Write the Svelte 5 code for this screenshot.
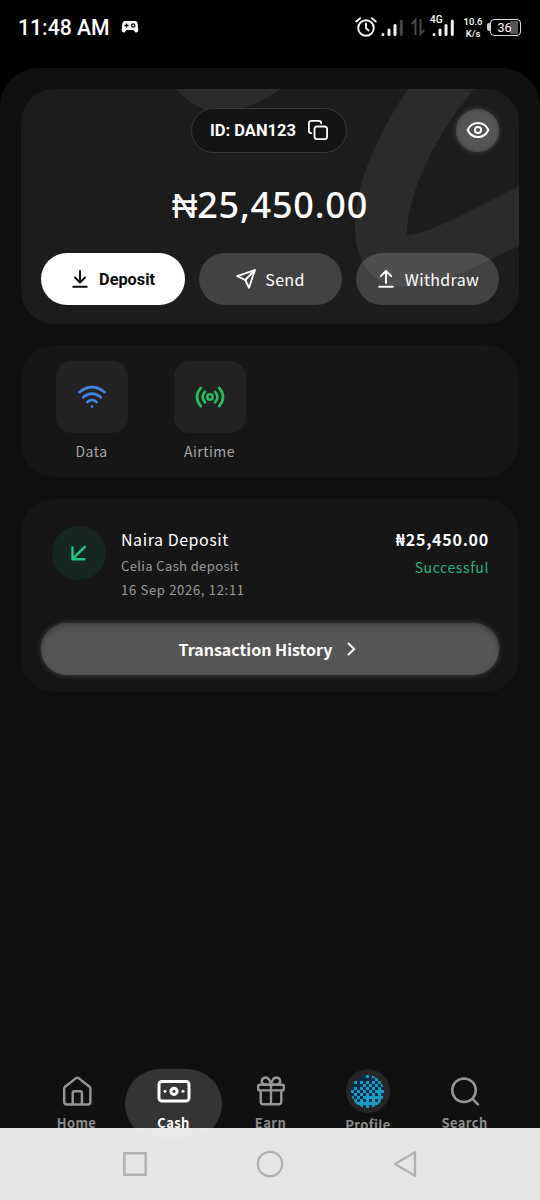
<script>
  const actions = [
    { label: 'Deposit', kind: 'deposit', paths: ['M10 2v11', 'M5 8.500l5 5 5-5', 'M3.200 17.800h13.600'] },
    { label: 'Send', kind: 'send', paths: ['M1.200 7.200L18.800 1.200 13 18.800 9.300 11z', 'M9.300 11L18.800 1.200'] },
    { label: 'Withdraw', kind: 'withdraw', paths: ['M10 14V2.500', 'M4.800 7.200L10 2l5.200 5.200', 'M3.200 17.800h13.600'] }
  ];

  const cells = [];
  for (let y = 0; y < 11; y++) {
    for (let x = 0; x < 11; x++) {
      const level = x * 0.5 + y;
      const oddX = x % 2 === 1;
      const oddY = y % 2 === 1;
      let limit = 99;
      if (oddX && !oddY) limit = 2;
      else if (!oddX && oddY) limit = 4.5;
      else if (oddX && oddY) limit = 9;
      if (level >= limit) cells.push({ x: x * 3, y: y * 3 });
    }
  }
</script>

<div class="phone">
  <header class="status">
    <span class="clock">11:48 AM</span>
    <svg class="pad" width="18" height="14" viewBox="0 0 18 14">
      <path d="M4 1h10q2.500 0 2.700 3l.6 6.500Q17 13 14.500 12.500L12.500 10h-7L3.500 12.500Q1 13 .7 10.500L1.300 4Q1.500 1 4 1z" fill="#fff" />
      <path d="M5.500 3.500v4M3.500 5.500h4" stroke="#000" stroke-width="1.300" />
      <circle cx="12.200" cy="5.500" r="1.700" fill="none" stroke="#000" stroke-width="1.200" />
    </svg>
    <span class="grow"></span>
    <svg class="alarm" width="22" height="20" viewBox="0 0 22 20" fill="none" stroke="#f2f2f2" stroke-width="1.900" stroke-linecap="round">
      <circle cx="11" cy="11" r="7.800" />
      <path d="M11 6.500V11l2.500 2.500M1.200 4.500L5.200 1.200M20.800 4.500L16.800 1.200" />
    </svg>
    <svg class="bars" width="22" height="18" viewBox="0 0 22 18" stroke-width="3" stroke-linecap="round">
      <path d="M2 15.500v.1M8 11v4.500M14 6.500v9" stroke="#f2f2f2" />
      <path d="M20.300 2v13.500" stroke="#444" />
    </svg>
    <svg class="updown" width="14" height="18" viewBox="0 0 14 18" fill="none" stroke="#484848" stroke-width="2">
      <path d="M4.500 17V2L.8 6M9.500 1v15l3.700-4" />
    </svg>
    <div class="cell">
      <span class="gen">4G</span>
      <svg width="23" height="18" viewBox="0 0 23 18" stroke="#f2f2f2" stroke-width="3" stroke-linecap="round">
        <path d="M2 15.500v.1M8 11v4.500M14 6.500v9M20.300 2v13.500" />
      </svg>
    </div>
    <div class="rate"><span>10.6</span><span>K/s</span></div>
    <div class="battery"><i></i><b>36</b></div>
  </header>

  <main>
    <section class="card balance">
      <svg class="swirl" width="498" height="236" viewBox="0 0 498 236">
        <path d="M155 0Q174 23 202 23 228 21 260 0zM387 0C355 47 334 98 334 136C334 174 352 198 382 198C417 198 454 178 498 157V97C458 117 410 145 386 146C386 110 408 54 453 0z" fill="#2b2b2b" />
      </svg>
      <div class="top">
        <div class="idpill">
          <span>ID: DAN123</span>
          <svg width="20" height="20" viewBox="0 0 20 20" fill="none" stroke="#fff" stroke-width="1.800" stroke-linecap="round">
            <rect x="6.500" y="6.500" width="12.600" height="12.600" rx="2.600" />
            <path d="M3.300 13.200Q.9 13.200.9 10.800V3.400Q.9.900 3.400.9h7.400Q13.200.9 13.200 3.300" />
          </svg>
        </div>
        <div class="eye">
          <svg width="24" height="18" viewBox="0 0 24 18" fill="none" stroke="#fff" stroke-width="2">
            <path d="M1.700 9C3.700 4.400 7.500 2 12 2S20.300 4.400 22.300 9C20.300 13.600 16.500 16 12 16S3.700 13.600 1.700 9z" />
            <circle cx="12" cy="9" r="3.100" />
          </svg>
        </div>
      </div>
      <div class="amount"><span class="naira">₦</span>25,450.00</div>
      <div class="actions">
        {#each actions as a}
          <button class={a.kind}>
            <svg width="20" height="20" viewBox="0 0 20 20" fill="none" stroke="currentColor" stroke-width="1.900" stroke-linecap="round" stroke-linejoin="round">
              {#each a.paths as d}<path {d} />{/each}
            </svg>
            <span>{a.label}</span>
          </button>
        {/each}
      </div>
    </section>

    <section class="card services">
      <div class="service">
        <div class="tile">
          <svg width="30" height="24" viewBox="0 0 30 24" fill="none" stroke="#4285e8" stroke-width="2.600" stroke-linecap="round">
            <path d="M2.300 7.200Q15-3 27.700 7.200M6.200 12.300Q15 4.800 23.800 12.300M10.300 17Q15 13 19.700 17M15 21.500v.1" />
          </svg>
        </div>
        <span>Data</span>
      </div>
      <div class="service">
        <div class="tile">
          <svg width="30" height="24" viewBox="0 0 30 24" fill="none" stroke="#27bd5c" stroke-width="2.600" stroke-linecap="round">
            <circle cx="15" cy="12" r="2.700" />
            <path d="M5.800 2.800Q-1.800 12 5.800 21.200M24.200 2.800Q31.800 12 24.200 21.200M10 6.700Q5.200 12 10 17.300M20 6.700Q24.800 12 20 17.300" />
          </svg>
        </div>
        <span>Airtime</span>
      </div>
    </section>

    <section class="card history">
      <div class="entry">
        <div class="badge">
          <svg width="16" height="16" viewBox="0 0 16 16" fill="none" stroke="#22c585" stroke-width="2.400" stroke-linecap="round" stroke-linejoin="round">
            <path d="M14 1.700L1.800 13.900M1.500 2.500v11.800h12" />
          </svg>
        </div>
        <div class="info">
          <span class="title">Naira Deposit</span>
          <span class="sub">Celia Cash deposit</span>
          <span class="sub date">16 Sep 2026, 12:11</span>
        </div>
        <div class="result">
          <span class="sum">₦25,450.00</span>
          <span class="state">Successful</span>
        </div>
      </div>
      <button class="more">
        <span>Transaction History</span>
        <svg width="9" height="14" viewBox="0 0 9 14" fill="none" stroke="#fff" stroke-width="2" stroke-linecap="round" stroke-linejoin="round"><path d="M1.500 1.500L7.200 7 1.500 12.500" /></svg>
      </button>
    </section>
  </main>

  <nav>
    <div class="item">
      <svg width="30" height="32" viewBox="0 0 30 32" fill="none" stroke="#979797" stroke-width="2.400" stroke-linejoin="round" stroke-linecap="round">
        <path d="M2.200 13.500Q2.200 12.500 3.100 11.700L14 3.100Q15.300 2.200 16.600 3.100L27.500 11.700Q28.400 12.500 28.400 13.500V26.800Q28.400 29.500 25.700 29.500H4.900Q2.200 29.500 2.200 26.800zM10.700 29.300V18Q10.700 16.300 12.400 16.300h5.800Q19.900 16.300 19.900 18V29.300" />
      </svg>
      <span>Home</span>
    </div>
    <div class="item active">
      <svg width="34" height="32" viewBox="0 0 34 32" fill="none" stroke="#fff" stroke-width="3">
        <rect x="2" y="6.500" width="30" height="19.500" rx="3" />
        <circle cx="17" cy="16.300" r="3.100" />
        <circle cx="8" cy="16.300" r="1.500" fill="#fff" stroke="none" />
        <circle cx="26" cy="16.300" r="1.500" fill="#fff" stroke="none" />
      </svg>
      <span>Cash</span>
    </div>
    <div class="item">
      <svg width="30" height="32" viewBox="0 0 30 32" fill="none" stroke="#979797" stroke-width="2.400" stroke-linejoin="round">
        <rect x="2.200" y="9.800" width="25.600" height="5.600" rx="1.500" />
        <path d="M4.700 15.500V26.500Q4.700 29.200 7.400 29.200H22.600Q25.300 29.200 25.300 26.500V15.500M15 9.800V29M15 9.800H10Q5.500 9 5.700 6 6.300 2.700 9.500 2.500 13.500 2.500 15 9.800M15 9.800H20Q24.500 9 24.300 6 23.700 2.700 20.500 2.500 16.500 2.500 15 9.800" />
      </svg>
      <span>Earn</span>
    </div>
    <div class="item profile">
      <div class="avatar">
        <svg width="33" height="33" viewBox="0 0 33 33">
          <rect width="33" height="33" fill="#0a2d4c" />
          {#each cells as c}<rect x={c.x} y={c.y} width="3" height="3" fill="#189cc4" />{/each}
        </svg>
      </div>
      <span>Profile</span>
    </div>
    <div class="item">
      <svg width="30" height="32" viewBox="0 0 30 32" fill="none" stroke="#979797" stroke-width="2.500" stroke-linecap="round">
        <circle cx="14" cy="15.300" r="11.800" />
        <path d="M22.500 23.800L28 29.300" />
      </svg>
      <span>Search</span>
    </div>
  </nav>

  <footer>
    <svg width="24" height="24" viewBox="0 0 24 24" fill="none" stroke="#b0b0b0" stroke-width="2.500"><path d="M1.300 1.300h21.400v21.400H1.300z" /></svg>
    <svg width="28" height="28" viewBox="0 0 28 28" fill="none" stroke="#b0b0b0" stroke-width="2.200"><circle cx="14" cy="14" r="12.200" /></svg>
    <svg width="24" height="28" viewBox="0 0 24 28" fill="none" stroke="#b0b0b0" stroke-width="2.400" stroke-linejoin="round"><path d="M22 2.300v23.400L2 14z" /></svg>
  </footer>
</div>

<style>
  :global(body) { margin: 0; background: #000; }
  .phone {
    width: 540px; height: 1200px; overflow: hidden; background: #000; color: #fff;
    display: flex; flex-direction: column;
    font-family: "Noto Sans CJK SC", "Noto Sans", sans-serif; letter-spacing: .5px;
  }
  .phone * { box-sizing: border-box; }
  svg { display: block; flex: none; }
  button { border: 0; padding: 0; font: inherit; color: inherit; letter-spacing: inherit; display: flex; align-items: center; justify-content: center; }
  span { white-space: nowrap; }

  .status { height: 68px; flex: none; display: flex; align-items: flex-start; padding: 0 19px 0 18px; font-family: Roboto, sans-serif; letter-spacing: 0; }
  .clock { font-size: 21.200px; font-weight: 500; line-height: 26px; margin-top: 15px; }
  .pad { margin: 20px 0 0 11px; }
  .grow { flex: 1; }
  .alarm { margin: 17px 4px 0 0; }
  .bars { margin: 19px 8px 0 0; }
  .updown { margin: 18px 7px 0 0; }
  .cell { position: relative; padding-top: 19px; width: 24px; margin-right: 7px; }
  .gen { position: absolute; left: -2px; top: 14px; font-size: 10px; line-height: 12px; font-weight: 500; }
  .rate { width: 20px; margin: 16px 4px 0 0; display: flex; flex-direction: column; align-items: center; font-size: 9.500px; line-height: 11.500px; font-weight: 500; }
  .battery { display: flex; align-items: center; margin-top: 18.500px; }
  .battery i { width: 3px; height: 8px; background: #ccc; border-radius: 2px 0 0 2px; }
  .battery b { width: 31px; height: 17px; border: 1.500px solid #ddd; border-radius: 4px; font: 400 12.500px/15px Roboto, sans-serif; text-align: center; padding-right: 2px; background: linear-gradient(#555, #555) 19px 1px / 8px 13px no-repeat; }

  main { flex: 1; background: #101010; border-radius: 38px 38px 0 0; padding: 20.500px 21px 0; display: flex; flex-direction: column; gap: 21.500px; }
  .card { border-radius: 33px; background: #161616; }
  .balance { position: relative; height: 235px; background: #1c1c1c; overflow: hidden; padding: 19px 20px 0; flex: none; }
  .swirl { position: absolute; left: 0; top: 0; }
  .top { position: relative; display: grid; grid-template-columns: 43px 1fr 43px; align-items: center; height: 44px; }
  .idpill { grid-column: 2; justify-self: center; width: 156px; height: 45px; margin-right: 2px; border: 1.500px solid #3a3a3a; border-radius: 23px; background: #141414; display: flex; align-items: center; justify-content: center; gap: 12px; font: 700 16.500px Roboto, sans-serif; letter-spacing: 0; }
  .eye { width: 43px; height: 43px; border-radius: 50%; background: #555; box-shadow: 0 0 5px rgba(85, 85, 85, .8), inset 0 0 4px rgba(40, 40, 40, .4); display: grid; place-items: center; }
  .amount { position: relative; text-align: center; font: 500 36px/50px "Noto Sans", sans-serif; height: 50px; margin-top: 26.500px; letter-spacing: .8px; }
  .naira { font: 500 35px/50px "Noto Sans CJK SC", sans-serif; letter-spacing: 0; }
  .actions { position: relative; display: grid; grid-template-columns: 144px 143px 143px; gap: 14px; margin-top: 25px; }
  .actions button { height: 52px; border-radius: 26px; background: rgba(255, 255, 255, .17); font-size: 16px; letter-spacing: .35px; gap: 9px; }
  .actions .deposit { background: #fff; color: #0a0a0a; font: 700 16.300px Roboto, sans-serif; letter-spacing: 0; padding-right: 1px; }

  .services { height: 132px; flex: none; padding: 16px 34px 16px 34.500px; display: flex; gap: 46px; }
  .service { width: 72px; display: flex; flex-direction: column; align-items: center; font-size: 14px; line-height: 20px; color: #a5a5a5; gap: 8px; }
  .tile { width: 72px; height: 72px; border-radius: 16px; background: #222; display: grid; place-items: center; }

  .history { height: 193px; flex: none; padding: 27px 20px 0; }
  .entry { display: flex; padding: 0 10px 0 11px; height: 97px; }
  .badge { width: 54px; height: 54px; border-radius: 50%; background: #162621; display: grid; place-items: center; }
  .info { display: flex; flex-direction: column; margin-left: 15px; flex: 1; }
  .title { font-size: 16px; line-height: 27px; margin-bottom: 1px; letter-spacing: .55px; }
  .sub { font-size: 13px; line-height: 24px; color: #9c9c9c; letter-spacing: .38px; }
  .date { letter-spacing: .7px; }
  .result { display: flex; flex-direction: column; align-items: flex-end; }
  .sum { font-size: 16px; line-height: 27px; font-weight: 700; letter-spacing: .75px; }
  .state { font-size: 14px; line-height: 28px; color: #2cb27c; letter-spacing: .6px; }
  .more { width: 458px; height: 52px; border-radius: 26px; background: #555; box-shadow: 0 0 5px rgba(85, 85, 85, .8), inset 0 3px 5px rgba(30, 30, 30, .35); gap: 15px; padding-right: 5px; font-size: 16px; font-weight: 700; letter-spacing: 0; }

  nav { height: 60px; flex: none; background: #101010; display: grid; grid-template-columns: repeat(5, 97px); padding: 1px 0 0 28px; overflow: hidden; }
  .item { height: 70px; display: flex; flex-direction: column; align-items: center; padding-top: 6px; font-size: 13px; font-weight: 700; line-height: 20px; color: #8c8c8c; gap: 5.500px; letter-spacing: .4px; }
  .active { background: #343434; border-radius: 35px; color: #fff; }
  .profile { padding-top: 0; gap: 2px; }
  .profile span { letter-spacing: .4px; margin-left: 1px; }
  .avatar { width: 44px; height: 44px; border-radius: 50%; background: #262626; display: grid; place-items: center; }
  .avatar svg { border-radius: 50%; }

  footer { height: 72px; flex: none; background: radial-gradient(ellipse 42px 11px at 173px 0, #e9e9e9 85%, #e6e6e6); display: grid; grid-template-columns: repeat(3, 135px); justify-content: center; align-items: center; justify-items: center; }
</style>
